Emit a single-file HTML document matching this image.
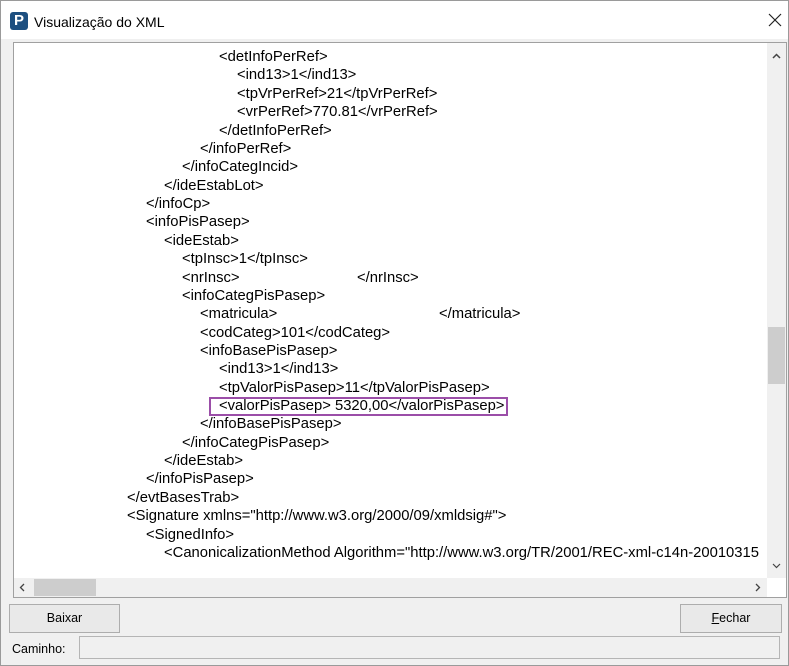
<!DOCTYPE html>
<html><head><meta charset="utf-8"><style>
body{margin:0;width:789px;height:666px;background:#f0f0f0;font-family:"Liberation Sans",sans-serif;position:relative;overflow:hidden}
.win{position:absolute;left:0;top:0;width:787px;height:664px;border:1px solid #9a9a9a;background:#f0f0f0}
.title{position:absolute;left:0;top:0;width:787px;height:38px;background:#fff}
.title .t{position:absolute;left:33px;top:13px;font-size:14px;color:#000}
.logo{position:absolute;left:9px;top:11px;width:18px;height:18px;background:#1d4f80;border-radius:3px;color:#fff;font-weight:bold;font-size:15px;line-height:18px;text-align:center}
.x{position:absolute;left:767px;top:12px}
.box{position:absolute;left:12px;top:41px;width:772px;height:554px;border:1px solid #a0a0a0;background:#fff;overflow:hidden}
.t2{position:absolute;left:0;top:2px}
.l{position:absolute;font-size:14.8px;white-space:pre;color:#000}
.vs{position:absolute;left:753px;top:0;width:19px;height:535px;background:#f0f0f0}
.hs{position:absolute;left:0;top:535px;width:753px;height:19px;background:#f0f0f0}
.btn{position:absolute;height:27px;border:1px solid #adadad;background:#e9e9e9;font-size:12.5px;text-align:center;line-height:27px}
.purp{position:absolute;left:195px;top:354px;width:295px;height:15px;border:2px solid #9b4ea8}
</style></head><body><div class="win">
<div class="title"><div class="logo">P</div><div class="t">Visualização do XML</div><svg class="x" width="14" height="14" viewBox="0 0 14 14"><path d="M1 1L13 13M13 1L1 13" stroke="#222" stroke-width="1.2"/></svg></div>
<div class="box">
<div class="t2">
<div class="l" style="left:205px;top:4px">&lt;detInfoPerRef&gt;</div>
<div class="l" style="left:223px;top:22px">&lt;ind13&gt;1&lt;/ind13&gt;</div>
<div class="l" style="left:223px;top:41px">&lt;tpVrPerRef&gt;21&lt;/tpVrPerRef&gt;</div>
<div class="l" style="left:223px;top:59px">&lt;vrPerRef&gt;770.81&lt;/vrPerRef&gt;</div>
<div class="l" style="left:205px;top:78px">&lt;/detInfoPerRef&gt;</div>
<div class="l" style="left:186px;top:96px">&lt;/infoPerRef&gt;</div>
<div class="l" style="left:168px;top:114px">&lt;/infoCategIncid&gt;</div>
<div class="l" style="left:150px;top:133px">&lt;/ideEstabLot&gt;</div>
<div class="l" style="left:132px;top:151px">&lt;/infoCp&gt;</div>
<div class="l" style="left:132px;top:169px">&lt;infoPisPasep&gt;</div>
<div class="l" style="left:150px;top:188px">&lt;ideEstab&gt;</div>
<div class="l" style="left:168px;top:206px">&lt;tpInsc&gt;1&lt;/tpInsc&gt;</div>
<div class="l" style="left:168px;top:225px">&lt;nrInsc&gt;</div>
<div class="l" style="left:343px;top:225px">&lt;/nrInsc&gt;</div>
<div class="l" style="left:168px;top:243px">&lt;infoCategPisPasep&gt;</div>
<div class="l" style="left:186px;top:261px">&lt;matricula&gt;</div>
<div class="l" style="left:425px;top:261px">&lt;/matricula&gt;</div>
<div class="l" style="left:186px;top:280px">&lt;codCateg&gt;101&lt;/codCateg&gt;</div>
<div class="l" style="left:186px;top:298px">&lt;infoBasePisPasep&gt;</div>
<div class="l" style="left:205px;top:316px">&lt;ind13&gt;1&lt;/ind13&gt;</div>
<div class="l" style="left:205px;top:335px">&lt;tpValorPisPasep&gt;11&lt;/tpValorPisPasep&gt;</div>
<div class="l" style="left:205px;top:353px">&lt;valorPisPasep&gt; 5320,00&lt;/valorPisPasep&gt;</div>
<div class="l" style="left:186px;top:371px">&lt;/infoBasePisPasep&gt;</div>
<div class="l" style="left:168px;top:390px">&lt;/infoCategPisPasep&gt;</div>
<div class="l" style="left:150px;top:408px">&lt;/ideEstab&gt;</div>
<div class="l" style="left:132px;top:426px">&lt;/infoPisPasep&gt;</div>
<div class="l" style="left:113px;top:445px">&lt;/evtBasesTrab&gt;</div>
<div class="l" style="left:113px;top:463px">&lt;Signature xmlns="http://www.w3.org/2000/09/xmldsig#"&gt;</div>
<div class="l" style="left:132px;top:482px">&lt;SignedInfo&gt;</div>
<div class="l" style="left:150px;top:500px">&lt;CanonicalizationMethod Algorithm="http://www.w3.org/TR/2001/REC-xml-c14n-20010315</div>
</div>
<div class="purp"></div>
<div class="vs"><svg style="position:absolute;left:5px;top:10px" width="9" height="6"><path d="M1 5L4.5 1.5L8 5" stroke="#444" stroke-width="1.5" fill="none"/></svg><div style="position:absolute;left:1px;top:284px;width:17px;height:57px;background:#cdcdcd"></div><svg style="position:absolute;left:5px;top:520px" width="9" height="6"><path d="M1 1L4.5 4.5L8 1" stroke="#444" stroke-width="1.2" fill="none"/></svg></div>
<div class="hs"><svg style="position:absolute;left:5px;top:5px" width="6" height="9"><path d="M5 1L1.5 4.5L5 8" stroke="#444" stroke-width="1.3" fill="none"/></svg><div style="position:absolute;left:20px;top:1px;width:62px;height:17px;background:#cdcdcd"></div><svg style="position:absolute;left:741px;top:5px" width="6" height="9"><path d="M1 1L4.5 4.5L1 8" stroke="#444" stroke-width="1.3" fill="none"/></svg></div>
</div>
<div class="btn" style="left:8px;top:603px;width:109px">Baixar</div>
<div class="btn" style="left:679px;top:603px;width:100px"><u>F</u>echar</div>
<div style="position:absolute;left:11px;top:641px;font-size:12.5px">Caminho:</div>
<div style="position:absolute;left:78px;top:635px;width:699px;height:21px;border:1px solid #b5b5b5;background:#f0f0f0"></div>
</div></body></html>
